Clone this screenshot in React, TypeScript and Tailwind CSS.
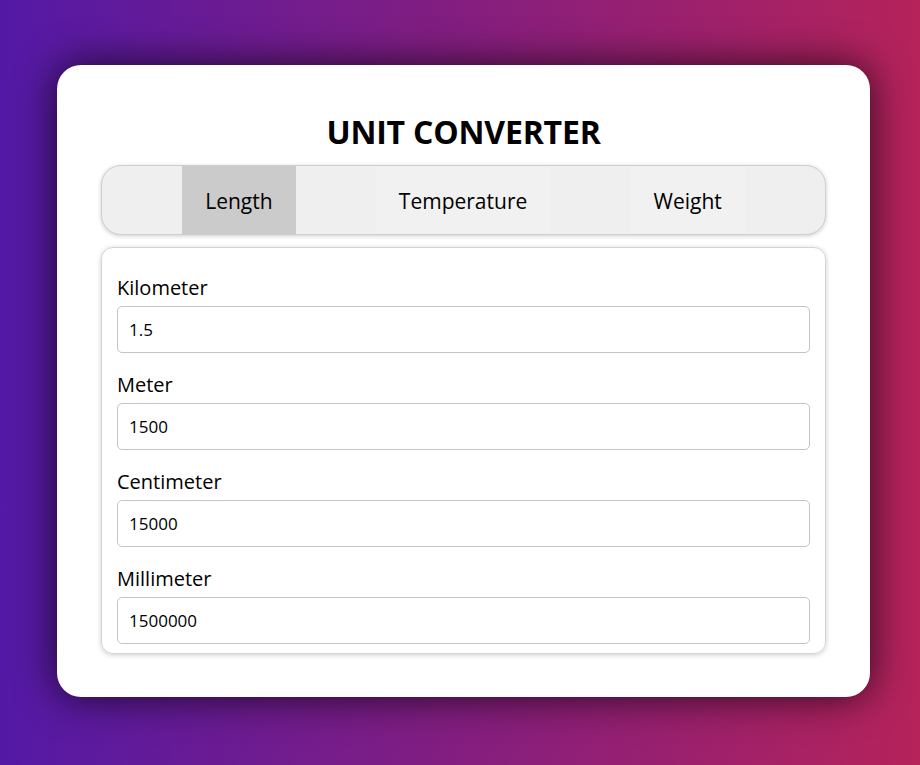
import React, { useState } from "react";

const units = [
  { name: "Kilometer", value: "1.5" },
  { name: "Meter", value: "1500" },
  { name: "Centimeter", value: "15000" },
  { name: "Millimeter", value: "1500000" },
];

const tabs = ["Length", "Temperature", "Weight"];

export default function App() {
  const [active, setActive] = useState("Length");

  return (
    <div
      className="min-h-[765px] w-full bg-linear-to-r/srgb from-[#5319a6] to-[#b5235a] pt-[65px] text-black"
      style={{ fontFamily: '"Open Sans", "Noto Sans", sans-serif' }}
    >
      <div className="ml-[57px] w-[813px] h-[632px] rounded-[24px] bg-white px-[44px] pt-[50px] shadow-[0_0_40px_rgba(0,0,0,0.75)]">
        <h1 className="text-center text-[32px] font-bold leading-[34px] tracking-[-0.2px]">UNIT CONVERTER</h1>

        <div className="mt-[16px] flex h-[70px] justify-evenly overflow-hidden rounded-[20px] border border-[#cfcfcf] bg-[#efefef] shadow-[0_1px_4px_rgba(0,0,0,0.2)]">
          {tabs.map((t) => (
            <button
              key={t}
              onClick={() => setActive(t)}
              className={
                "px-[23px] pt-[3px] text-[21px] " +
                (active === t ? "bg-[#cbcbcb]" : "bg-[#f1f1f1]")
              }
            >
              {t}
            </button>
          ))}
        </div>

        <div className="mt-[12px] rounded-[12px] border border-[#d4d4d4] px-[15px] pt-[25px] pb-[9px] shadow-[0_1px_5px_rgba(0,0,0,0.2)]">
          {units.map((u, i) => (
            <div key={u.name} className={i > 0 ? "mt-[17px]" : ""}>
              <label className="block text-[20px] leading-[30px]">{u.name}</label>
              <input
                defaultValue={u.value}
                className="mt-[3px] block h-[47px] w-full rounded-[5px] border border-[#c4c4c4] px-[11px] text-[17px] outline-none"
              />
            </div>
          ))}
        </div>
      </div>
    </div>
  );
}
